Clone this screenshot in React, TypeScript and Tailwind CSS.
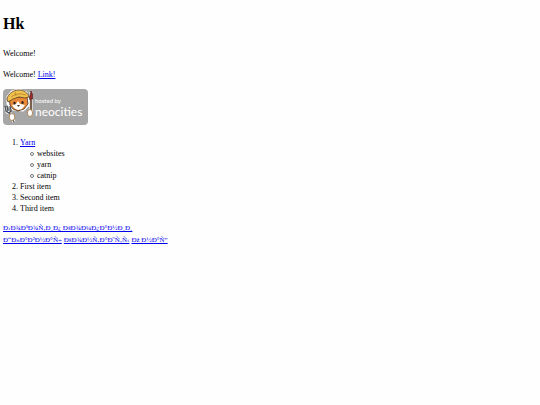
const links = [
    { label: 'Ð“Ð»Ð°Ð²Ð½Ð°Ñ÷', href: '#home' },
    { label: 'ÐšÐ¾Ð½Ñ‚Ð°ÐºÑ‚Ñ‹', href: '#contacts' },
    { label: 'Ðž Ð½Ð°Ñ”', href: '#about' },
];

const topics = ['websites', 'yarn', 'catnip'];

function NeocitiesBadge() {
    return (
        <svg viewBox="0 0 85 36" className="h-9 w-[85px]" role="img" aria-label="Hosted by Neocities">
            <rect width="85" height="36" rx="4" fill="#a6a6a6" />
            <text x="32" y="14" fontSize="6" fontFamily="Lato, sans-serif" fill="#fff">hosted by</text>
            <text x="32" y="27" fontSize="12" fontFamily="Lato, sans-serif" fill="#fff">neocities</text>
            <g stroke="#fff" strokeWidth="3" strokeLinejoin="round" fill="#fff">
                <path d="M5 8 9 3 16 1 23 4 25 10 25 16 20 21 10 20 5 15Z" />
                <path d="M2 18 4 23 7 24 11 33M28 3 28 26" />
            </g>
            <path d="M6 8 7 16 10 20 15 22 21 20 25 15 24 8Z" fill="#e98937" stroke="#49301f" strokeWidth=".8" />
            <path d="M9 16 13 15 15 12 17 15 22 16 19 20 15 21 11 19Z" fill="#fff" />
            <path d="M4 10C5 5 10 1 16 1C21 1 25 4 26 8L22 9 16 8 10 10 5 13Z" fill="#efc14e" stroke="#5b401d" strokeWidth=".8" />
            <path d="M8 8Q14 3 23 6M12 3 13 7" fill="none" stroke="#b57d24" strokeWidth=".8" />
            <ellipse cx="11.5" cy="14" rx="1.2" ry="1.6" fill="#2b2321" />
            <ellipse cx="19.5" cy="13.5" rx="1.2" ry="1.6" fill="#2b2321" />
            <path d="M14 16h3l-1.5 2z" fill="#49301f" />
            <path d="M2 17 3 22 6 24 8 22 7 17M4 17 5 22M6 23 11 33" fill="none" stroke="#50565a" strokeWidth="1.4" />
            <path d="M28 11v16" stroke="#593820" strokeWidth="1.6" />
            <path d="M26.5 9 28 2 29.5 5 29.5 10 27 11Z" fill="#9b2929" stroke="#4a2020" strokeWidth=".7" />
            <ellipse cx="9" cy="28" rx="2.8" ry="3.5" fill="#fff" stroke="#a5743e" strokeWidth=".8" />
            <ellipse cx="27" cy="24" rx="2.6" ry="3.5" fill="#fff" stroke="#a5743e" strokeWidth=".8" />
        </svg>
    );
}

export default function App() {
    return (
        <main className="min-h-screen bg-[#fefefe] px-[3px] pt-3 font-['Liberation_Serif',serif] text-[8px] leading-[11px] text-black [&_a]:text-[#0000ee] [&_a]:underline">
            <h1 className="text-[16px] leading-6 font-bold">Hk</h1>
            <p className="mt-3">Welcome!</p>
            <p className="mt-[10px]">
                Welcome! <a href="#link">Link!</a>
            </p>
            <a href="#neocities" className="mt-[9px] block w-fit">
                <NeocitiesBadge />
            </a>
            <ol className="mt-3 list-decimal pl-[17px]">
                <li>
                    <a href="#yarn">Yarn</a>
                    <ul>
                        {topics.map((topic) => (
                            <li
                                key={topic}
                                className="flex items-center gap-[3px] pl-[10px] before:size-1 before:rounded-full before:border before:border-[#777] before:content-['']"
                            >
                                {topic}
                            </li>
                        ))}
                    </ul>
                </li>
                <li>First item</li>
                <li>Second item</li>
                <li>Third item</li>
            </ol>
            <nav className="mt-2 text-[7px] leading-3">
                <a href="#logo" className="block w-fit">Ð›Ð¾Ð³Ð¾Ñ‚Ð¸Ð¿ ÐšÐ¾Ð¼Ð¿Ð°Ð½Ð¸Ð¸</a>
                <div className="flex gap-[2px]">
                    {links.map((link) => (
                        <a key={link.href} href={link.href}>{link.label}</a>
                    ))}
                </div>
            </nav>
        </main>
    );
}
